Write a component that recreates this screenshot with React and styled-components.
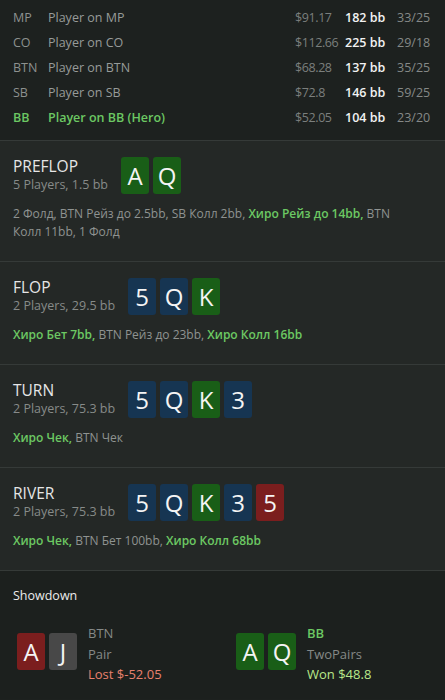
import React from "react";
import styled, { createGlobalStyle } from "styled-components";

const GlobalStyle = createGlobalStyle`
  body {
    margin: 0;
    background: #1d211f;
    font-family: "Open Sans", "Noto Sans", sans-serif;
    color: #9a9e9c;
  }
`;

const players = [
  { pos: "MP", name: "Player on MP", money: "$91.17", stack: "182 bb", ratio: "33/25" },
  { pos: "CO", name: "Player on CO", money: "$112.66", stack: "225 bb", ratio: "29/18" },
  { pos: "BTN", name: "Player on BTN", money: "$68.28", stack: "137 bb", ratio: "35/25" },
  { pos: "SB", name: "Player on SB", money: "$72.8", stack: "146 bb", ratio: "59/25" },
  { pos: "BB", name: "Player on BB (Hero)", money: "$52.05", stack: "104 bb", ratio: "23/20", hero: true },
];

const streets = [
  {
    name: "PREFLOP",
    meta: "5 Players, 1.5 bb",
    cards: [["A", "green"], ["Q", "green"]],
    actions: [
      ["2 Фолд, BTN Рейз до 2.5bb, SB Колл 2bb, ", false],
      ["Хиро Рейз до 14bb,", true],
      [" BTN Колл 11bb, 1 Фолд", false],
    ],
  },
  {
    name: "FLOP",
    meta: "2 Players, 29.5 bb",
    cards: [["5", "blue"], ["Q", "blue"], ["K", "green"]],
    actions: [
      ["Хиро Бет 7bb,", true],
      [" BTN Рейз до 23bb, ", false],
      ["Хиро Колл 16bb", true],
    ],
  },
  {
    name: "TURN",
    meta: "2 Players, 75.3 bb",
    cards: [["5", "blue"], ["Q", "blue"], ["K", "green"], ["3", "blue"]],
    actions: [
      ["Хиро Чек,", true],
      [" BTN Чек", false],
    ],
  },
  {
    name: "RIVER",
    meta: "2 Players, 75.3 bb",
    cards: [["5", "blue"], ["Q", "blue"], ["K", "green"], ["3", "blue"], ["5", "red"]],
    actions: [
      ["Хиро Чек,", true],
      [" BTN Бет 100bb, ", false],
      ["Хиро Колл 68bb", true],
    ],
  },
];

const showdown = [
  { pos: "BTN", hand: "Pair", result: "Lost $-52.05", cards: [["A", "red"], ["J", "grey"]] },
  { pos: "BB", hand: "TwoPairs", result: "Won $48.8", cards: [["A", "green"], ["Q", "green"]], hero: true },
];

const cardColors = {
  green: "#195e17",
  blue: "#163552",
  red: "#7b1e1e",
  grey: "#484848",
};

const Players = styled.div`
  display: grid;
  grid-template-columns: 35px 1fr 50px 52px 32px;
  grid-auto-rows: 25px;
  align-items: center;
  padding: 5px 16px 10px 13px;
  border-bottom: 1px solid #353a38;
  font-size: 12.5px;
`;

const Pos = styled.div`
  color: ${(p) => (p.$hero ? "#6cc863" : "#8d918f")};
  font-weight: ${(p) => (p.$hero ? 600 : 400)};
`;

const Name = styled(Pos)`
  color: ${(p) => (p.$hero ? "#6cc863" : "#979b99")};
`;

const Money = styled.div`
  color: #7b7f7d;
  letter-spacing: -0.4px;
`;

const Stack = styled.div`
  color: #f2f2f2;
  font-weight: 600;
`;

const Ratio = styled.div`
  color: #858987;
`;

const Street = styled.section`
  background: #242826;
  padding: 15px 13px 20px;
  border-bottom: 1px solid #353a38;
`;

const StreetHeader = styled.div`
  display: flex;
  align-items: center;
  gap: 13px;
`;

const StreetInfo = styled.div`
  display: flex;
  flex-direction: column;
`;

const StreetName = styled.div`
  color: #e6e6e6;
  font-size: 15.5px;
  line-height: 20px;
`;

const StreetMeta = styled.div`
  color: #878b89;
  font-size: 12.5px;
  line-height: 18px;
`;

const Cards = styled.div`
  display: flex;
  gap: 4px;
`;

const Card = styled.div`
  width: 28px;
  height: 37px;
  border-radius: 3px;
  background: ${(p) => cardColors[p.$color]};
  color: #f4f4f4;
  font-size: 24px;
  line-height: 37px;
  text-align: center;
`;

const Actions = styled.p`
  margin: 11px 0 0;
  max-width: 400px;
  font-size: 12px;
  line-height: 18px;
  color: #8f9391;
`;

const Hero = styled.span`
  color: #6cc863;
  font-weight: 600;
`;

const Showdown = styled.section`
  background: #1c201e;
  padding: 16px 13px 14px;
`;

const ShowdownTitle = styled.div`
  color: #ececec;
  font-size: 12.5px;
  line-height: 18px;
`;

const ShowdownGrid = styled.div`
  display: grid;
  grid-template-columns: 219px 1fr;
  margin-top: 14px;
  padding-left: 4px;
`;

const Seat = styled.div`
  display: flex;
  align-items: center;
  gap: 11px;
`;

const SeatInfo = styled.div`
  display: flex;
  flex-direction: column;
  font-size: 13px;
  line-height: 20.5px;
  padding-top: 4px;
`;

const SeatPos = styled.div`
  color: ${(p) => (p.$hero ? "#6cc863" : "#858987")};
  font-weight: ${(p) => (p.$hero ? 600 : 400)};
`;

const SeatHand = styled.div`
  color: #858987;
`;

const Result = styled.div`
  color: ${(p) => (p.$won ? "#b9e98a" : "#e8806e")};
`;

export default function App() {
  return (
    <>
      <GlobalStyle />
      <Players>
        {players.map((p) => (
          <React.Fragment key={p.pos}>
            <Pos $hero={p.hero}>{p.pos}</Pos>
            <Name $hero={p.hero}>{p.name}</Name>
            <Money>{p.money}</Money>
            <Stack>{p.stack}</Stack>
            <Ratio>{p.ratio}</Ratio>
          </React.Fragment>
        ))}
      </Players>
      {streets.map((s) => (
        <Street key={s.name}>
          <StreetHeader>
            <StreetInfo>
              <StreetName>{s.name}</StreetName>
              <StreetMeta>{s.meta}</StreetMeta>
            </StreetInfo>
            <Cards>
              {s.cards.map(([v, c], i) => (
                <Card key={i} $color={c}>{v}</Card>
              ))}
            </Cards>
          </StreetHeader>
          <Actions>
            {s.actions.map(([t, hero], i) =>
              hero ? <Hero key={i}>{t}</Hero> : <span key={i}>{t}</span>
            )}
          </Actions>
        </Street>
      ))}
      <Showdown>
        <ShowdownTitle>Showdown</ShowdownTitle>
        <ShowdownGrid>
          {showdown.map((p) => (
            <Seat key={p.pos}>
              <Cards>
                {p.cards.map(([v, c], i) => (
                  <Card key={i} $color={c}>{v}</Card>
                ))}
              </Cards>
              <SeatInfo>
                <SeatPos $hero={p.hero}>{p.pos}</SeatPos>
                <SeatHand>{p.hand}</SeatHand>
                <Result $won={p.hero}>{p.result}</Result>
              </SeatInfo>
            </Seat>
          ))}
        </ShowdownGrid>
      </Showdown>
    </>
  );
}
